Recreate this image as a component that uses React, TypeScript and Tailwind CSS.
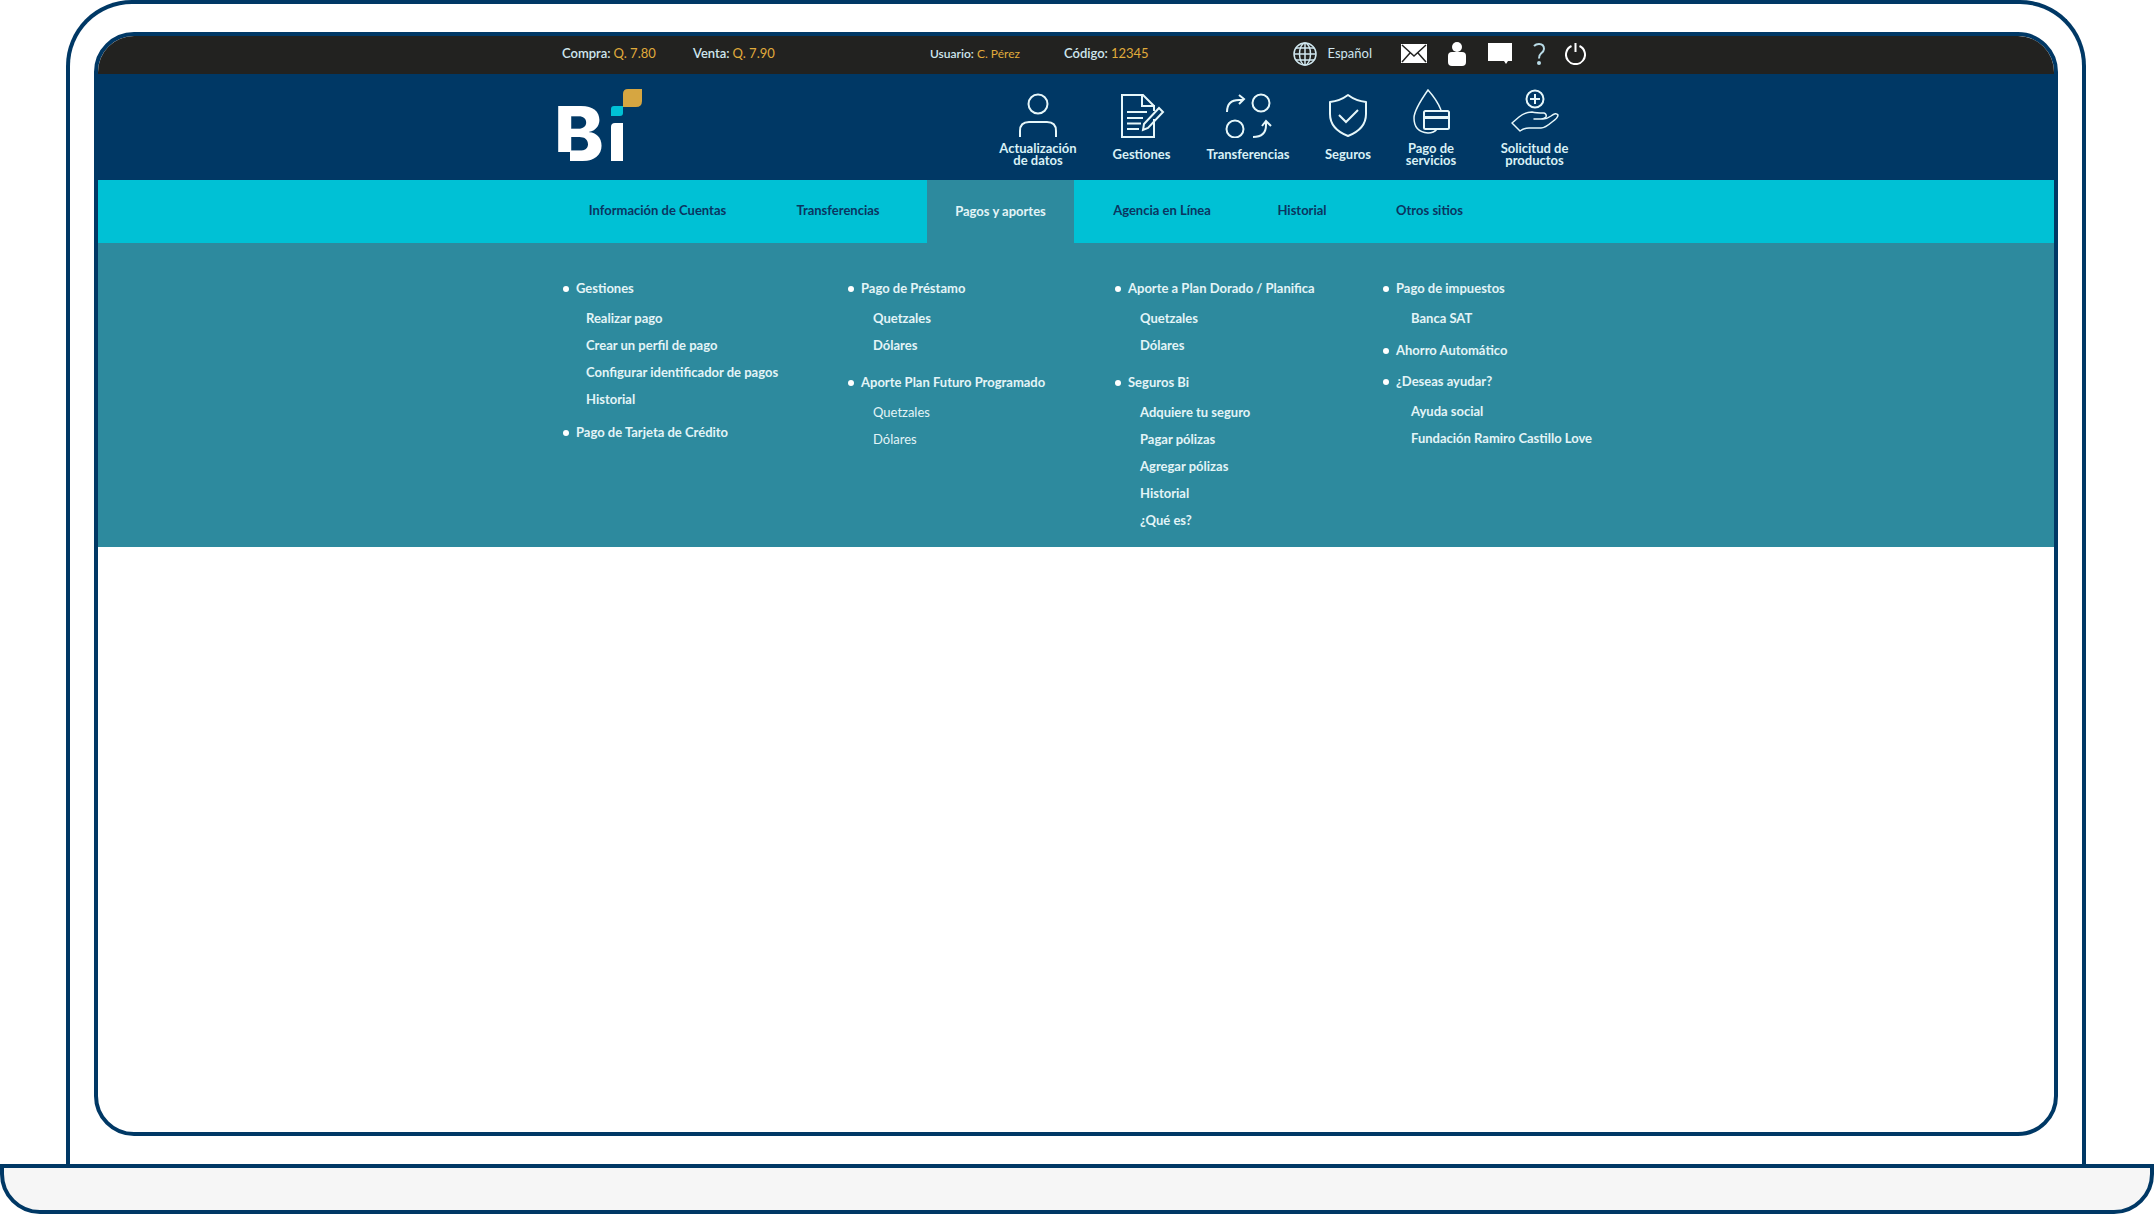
import type { ReactNode } from "react";

type Group = { title: string; items: string[]; light?: boolean };
type Column = { gap: string; indent: string; groups: Group[] };

const rates = [
  { label: "Compra:", value: "Q. 7.80", className: "w-[131px] text-[13px]" },
  { label: "Venta:", value: "Q. 7.90", className: "w-[237px] text-[13px]" },
  { label: "Usuario:", value: "C. Pérez", className: "w-[134px] text-[12px]" },
  { label: "Código:", value: "12345", className: "text-[13px]" },
];

const tabs = [
  { label: "Información de Cuentas", width: "w-[183px]" },
  { label: "Transferencias", width: "w-[178px]" },
  { label: "Pagos y aportes", width: "w-[147px]", active: true },
  { label: "Agencia en Línea", width: "w-[176px]" },
  { label: "Historial", width: "w-[104px]" },
  { label: "Otros sitios", width: "w-[151px]" },
];

const columns: Column[] = [
  {
    gap: "gap-2",
    indent: "pl-7",
    groups: [
      { title: "Gestiones", items: ["Realizar pago", "Crear un perfil de pago", "Configurar identificador de pagos", "Historial"] },
      { title: "Pago de Tarjeta de Crédito", items: [] },
    ],
  },
  {
    gap: "gap-3",
    indent: "pl-[30px]",
    groups: [
      { title: "Pago de Préstamo", items: ["Quetzales", "Dólares"] },
      { title: "Aporte Plan Futuro Programado", items: ["Quetzales", "Dólares"], light: true },
    ],
  },
  {
    gap: "gap-3",
    indent: "pl-[30px]",
    groups: [
      { title: "Aporte a Plan Dorado / Planifica", items: ["Quetzales", "Dólares"] },
      { title: "Seguros Bi", items: ["Adquiere tu seguro", "Pagar pólizas", "Agregar pólizas", "Historial", "¿Qué es?"] },
    ],
  },
  {
    gap: "gap-[7px]",
    indent: "pl-[33px]",
    groups: [
      { title: "Pago de impuestos", items: ["Banca SAT"] },
      { title: "Ahorro Automático", items: [] },
      { title: "¿Deseas ayudar?", items: ["Ayuda social", "Fundación Ramiro Castillo Love"] },
    ],
  },
];

function Logo() {
  return (
    <svg width="96" height="98" viewBox="-8 -4 96 98" role="img" aria-label="Bi">
      <text x="-4" y="72" fontFamily="Inter, sans-serif" fontWeight="800" fontSize="75" fill="#fff">B</text>
      <path d="M-1 63h13v10H-1z" fill="#003865" />
      <path d="M53 38q0-4 4-4h8v38H53z" fill="#fff" />
      <path d="M53 20q0-3 3-3h9v7q0 3-3 3h-9z" fill="#00c1d5" />
      <path d="M65 5q0-5 5-5h14v12q0 6-6 6H65z" fill="#d6a641" />
    </svg>
  );
}

function LineIcon({ children }: { children: ReactNode }) {
  return (
    <svg width="48" height="49" viewBox="0 0 48 49" fill="none" stroke="#e6f7fa" strokeWidth="2" aria-hidden="true">
      {children}
    </svg>
  );
}

const services = [
  {
    label: ["Actualización", "de datos"],
    width: "w-[100px]",
    icon: (
      <>
        <circle cx="24" cy="15" r="9.5" />
        <path d="M6 48V42q0-9 9-9h18q9 0 9 9v6" />
      </>
    ),
  },
  {
    label: ["Gestiones"],
    width: "w-[107px]",
    icon: (
      <>
        <path d="M36 17 25 6H4v42h32V30" />
        <path d="M24 6v11h12v5M9 23h20M9 29h16M9 34.5h14M9 40h12" />
        <path d="m26 35 15-16 4 4-15 16-5 2z" />
      </>
    ),
  },
  {
    label: ["Transferencias"],
    width: "w-[106px]",
    icon: (
      <>
        <circle cx="37" cy="14" r="8.5" />
        <circle cx="11" cy="40" r="8.5" />
        <path d="M3 23q0-12 12-12h4M15 6l5 4-5 5M29 48q13 0 13-12v-4M38 37l4-5 5 5" />
      </>
    ),
  },
  {
    label: ["Seguros"],
    width: "w-[94px]",
    icon: (
      <>
        <path d="M24 6q8 6 18 7v12q0 15-18 22Q6 40 6 25V13q10-1 18-7z" strokeLinejoin="round" />
        <path d="m15 26 7 7 12-12" />
      </>
    ),
  },
  {
    label: ["Pago de", "servicios"],
    width: "w-[72px]",
    icon: (
      <>
        <path d="M34 21Q30 11 21 1 7 21 7 29q0 14 14 15 6 0 9-4" strokeWidth="1.5" />
        <rect x="17" y="22" width="25" height="18" rx="1.5" />
        <path d="M17 28.5h25" strokeWidth="3" />
      </>
    ),
  },
  {
    label: ["Solicitud de", "productos"],
    width: "ml-2 w-[119px]",
    icon: (
      <>
        <circle cx="24" cy="10" r="8.5" />
        <path d="M24 5v10M19 10h10" />
        <path
          d="M1 34l7-6q6-5 13-5 4 1 12 1 3 1 2 4-2 2-5 2h-7 9q4 0 8-3 5-4 7-1 0 3-6 7-7 6-11 6H18q-5 0-9 3z"
          strokeWidth="1.5"
          strokeLinejoin="round"
        />
      </>
    ),
  },
];

function TopBar() {
  return (
    <div className="bg-[#222220]">
      <div className="mx-auto flex h-[38px] max-w-[1036px] items-center pb-[3px] text-[#cfe6ee]">
        <dl className="flex items-center pl-1">
          {rates.map((rate) => (
            <div key={rate.label} className={`flex gap-[3px] whitespace-nowrap ${rate.className}`}>
              <dt className="font-semibold">{rate.label}</dt>
              <dd className="text-[#e0ab3b]">{rate.value}</dd>
            </div>
          ))}
        </dl>
        <div className="ml-auto flex items-center pr-2">
          <button type="button" className="mr-[29px] flex items-center gap-[11px] text-[13px]">
            <svg width="24" height="24" viewBox="0 0 24 24" fill="none" stroke="currentColor" strokeWidth="1.5" aria-hidden="true">
              <circle cx="12" cy="12" r="11" />
              <ellipse cx="12" cy="12" rx="5.5" ry="11" />
              <path d="M12 1v22M1 12h22M3 6h18M3 18h18" />
            </svg>
            Español
          </button>
          <button type="button" aria-label="Mensajes">
            <svg width="26" height="19" viewBox="0 0 26 19" aria-hidden="true">
              <path d="M0 0h26v19H0z" fill="#fff" />
              <path d="m1 1 12 11L25 1M1 18l8-9M25 18l-8-9" fill="none" stroke="#222220" strokeWidth="1.5" />
            </svg>
          </button>
          <button type="button" aria-label="Perfil" className="ml-[21px]">
            <svg width="18" height="24" viewBox="0 0 18 24" fill="#fff" aria-hidden="true">
              <circle cx="9" cy="5" r="5" />
              <rect y="10" width="18" height="14" rx="4" />
            </svg>
          </button>
          <button type="button" aria-label="Chat" className="ml-[22px]">
            <svg width="24" height="21" viewBox="0 0 24 21" fill="#fff" aria-hidden="true">
              <path d="M0 0h24v18h-4l-2 3-2-3H0z" />
            </svg>
          </button>
          <button type="button" aria-label="Ayuda" className="ml-[21px]">
            <svg width="12" height="22" viewBox="0 0 12 22" aria-hidden="true">
              <path d="M1 3q2-2 5-2 5 0 5 5 0 2-3 4.5-2 1.5-2 5" fill="none" stroke="#b9dbe6" strokeWidth="2" />
              <circle cx="6" cy="20" r="2" fill="#b9dbe6" />
            </svg>
          </button>
          <button type="button" aria-label="Salir" className="ml-5">
            <svg width="21" height="22" viewBox="0 0 21 22" fill="none" stroke="#fff" strokeWidth="2" aria-hidden="true">
              <path d="M6.5 3a9.5 9.5 0 1 0 8 0M10.5 0v9" />
            </svg>
          </button>
        </div>
      </div>
    </div>
  );
}

function Header() {
  return (
    <header className="bg-[#003865]">
      <div className="mx-auto flex h-[106px] max-w-[1036px] justify-between">
        <a href="#inicio" className="-ml-2 pt-[11px]">
          <Logo />
        </a>
        <nav aria-label="Servicios" className="flex pt-[15px] text-[13px] leading-3 font-bold text-[#d9f1f6]">
          {services.map((service) => (
            <a key={service.label[0]} href="#servicio" className={`flex flex-col items-center ${service.width}`}>
              <LineIcon>{service.icon}</LineIcon>
              <span className="mt-[3px] flex h-[26px] flex-col justify-center text-center">
                {service.label.map((line) => (
                  <span key={line}>{line}</span>
                ))}
              </span>
            </a>
          ))}
        </nav>
      </div>
    </header>
  );
}

function Tabs() {
  return (
    <nav aria-label="Principal" className="bg-[#00c1d5]">
      <div className="mx-auto flex h-[63px] max-w-[1036px] pl-2 text-[13px] font-bold">
        {tabs.map((tab) => (
          <a
            key={tab.label}
            href="#menu"
            className={`flex items-center justify-center whitespace-nowrap ${tab.width} ${
              tab.active ? "bg-[#2d8a9e] text-[#e3f4f7]" : "pb-0.5 text-[#0b3561]"
            }`}
          >
            {tab.label}
          </a>
        ))}
      </div>
    </nav>
  );
}

function MegaMenu() {
  return (
    <div className="bg-[#2d8a9e]">
      <div className="mx-auto grid max-w-[1036px] grid-cols-[285px_267px_268px_auto] pt-[34px] pb-[13px] text-[13px] font-bold text-[#e3f4f7]">
        {columns.map((column, index) => (
          <div key={index} className={`flex flex-col ${column.gap}`}>
            {column.groups.map((group) => (
              <section key={group.title}>
                <h2 className="flex h-6 items-center gap-[7px] pl-[5px] whitespace-nowrap">
                  <span className="size-1.5 rounded-full bg-white" />
                  {group.title}
                </h2>
                {group.items.length > 0 && (
                  <ul className={`pt-1 leading-[27px] whitespace-nowrap ${column.indent} ${group.light ? "font-normal" : ""}`}>
                    {group.items.map((item) => (
                      <li key={item}>
                        <a href="#opcion">{item}</a>
                      </li>
                    ))}
                  </ul>
                )}
              </section>
            ))}
          </div>
        ))}
      </div>
    </div>
  );
}

export default function App() {
  return (
    <div className="flex min-h-screen flex-col bg-white font-[Lato,sans-serif]">
      <div className="mr-[68px] ml-[66px] flex flex-1 flex-col rounded-t-[66px] border-4 border-b-0 border-[#003865] px-6 pt-7 pb-7">
        <main className="flex-1 overflow-hidden rounded-[40px] border-4 border-[#003865]">
          <TopBar />
          <Header />
          <Tabs />
          <MegaMenu />
        </main>
      </div>
      <div className="h-[50px] rounded-b-[40px] border-4 border-[#003865] bg-[#f6f6f6]" />
    </div>
  );
}
